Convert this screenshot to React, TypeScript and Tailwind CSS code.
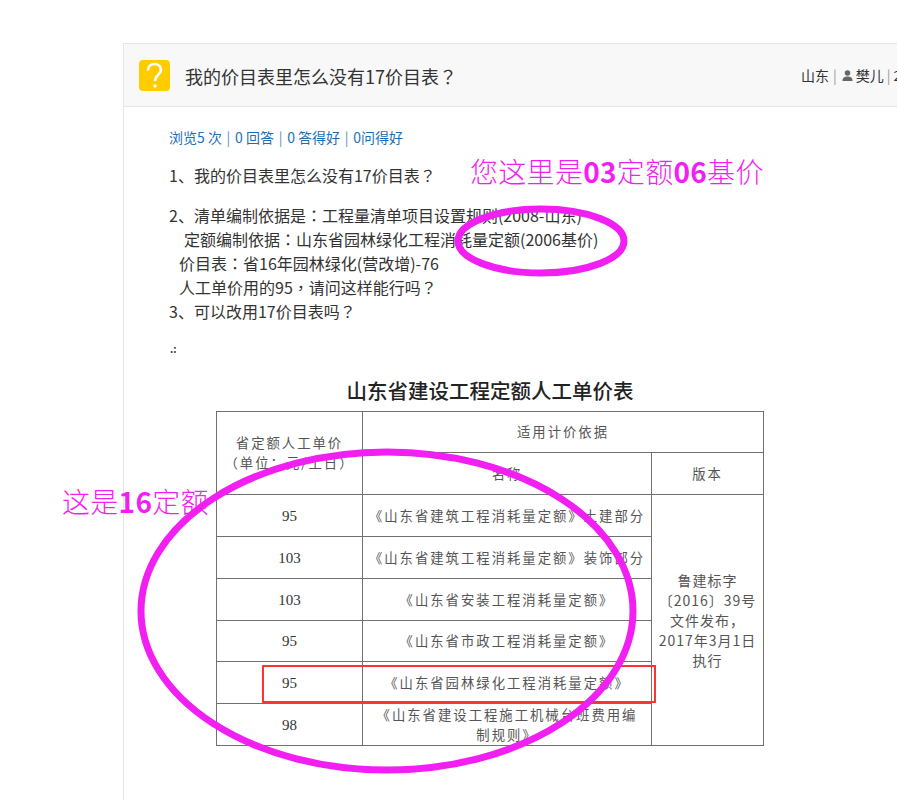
const cjk = "font-['Noto_Sans_CJK_SC','Liberation_Sans',sans-serif]";
const tc = "font-['Noto_Sans_CJK_TC','Liberation_Sans',sans-serif]";

function Sep({ tone, gap }: { tone: string; gap: string }) {
  return <span className={`${gap} ${tone}`}>|</span>;
}

function P({ c }: { c: string }) {
  return <span className={tc}>{c}</span>;
}

const rows: { price: string; h: string; name: React.ReactNode }[] = [
  { price: "95", h: "h-[42px]", name: "《山东省建筑工程消耗量定额》土建部分" },
  { price: "103", h: "h-[42px]", name: "《山东省建筑工程消耗量定额》装饰部分" },
  { price: "103", h: "h-[42px]", name: "《山东省安装工程消耗量定额》" },
  { price: "95", h: "h-[41px]", name: "《山东省市政工程消耗量定额》" },
  { price: "95", h: "h-[42px]", name: "《山东省园林绿化工程消耗量定额》" },
  { price: "98", h: "h-[42px]", name: <>《山东省建设工程施工机械台班费用编<br />制规则》</> },
];

const cell = "border border-[#707070] text-center align-middle p-0";

export default function App() {
  return (
    <div className={`relative w-[897px] h-[800px] overflow-hidden bg-white ${cjk}`}>
      <div className="pt-[43px] pl-[123px]">
        <div className="w-[900px] h-[757px] border-t border-l border-[#e5e5e5]">
          <header className="flex items-center h-[63px] bg-[#f8f8f8] border-b border-[#e5e5e5] pl-[15px]">
            <div className="flex items-center justify-center w-[31px] h-[31px] rounded-[4px] bg-[#ffcc00]">
              <svg viewBox="0 0 31 31" className="w-[31px] h-[31px]" fill="none" stroke="#fff" strokeWidth="2.6">
                <path d="M9 10.5 C9 6.5 12 4 15.5 4 C19.5 4 22 6.8 22 10 C22 14.5 16 15 16 21" />
                <circle cx="16" cy="26" r="1.8" fill="#fff" stroke="none" />
              </svg>
            </div>
            <h1 className="ml-[15px] pt-[1px] text-[18px] leading-[26px] text-[#333]">我的价目表里怎么没有17价目表<P c="？" /></h1>
            <div className="ml-[344px] flex items-center text-[14px] text-[#333] whitespace-nowrap">
              <span>山东</span>
              <Sep tone="text-[#999]" gap="mx-[4px]" />
              <svg viewBox="0 0 12 12" className="w-[11px] h-[11px] mx-[1px] fill-[#666]">
                <circle cx="6" cy="3.2" r="3" />
                <path d="M0.5 12 C0.5 8 3 7 6 7 C9 7 11.5 8 11.5 12 Z" />
              </svg>
              <span className="ml-[2px]">樊儿</span>
              <Sep tone="text-[#999]" gap="mx-[3px]" />
              <span>2017-04-10</span>
            </div>
          </header>

          <main className="pl-[45px] pt-[18px]">
            <p className="text-[14px] leading-[24px] text-[#1a6fb8]">
              浏览5 次<Sep tone="text-[#5f8fc4]" gap="mx-[4.7px]" />0 回答<Sep tone="text-[#5f8fc4]" gap="mx-[4.7px]" />0 答得好<Sep tone="text-[#5f8fc4]" gap="mx-[4.7px]" />0问得好
            </p>
            <div className="mt-[14px] text-[16px] leading-[24px] text-[#333] whitespace-nowrap">
              <p className="mb-4">1、我的价目表里怎么没有17价目表<P c="？" /></p>
              <p>2、清单编制依据是<P c="：" />工程量清单项目设置规则(2008-山东)</p>
              <p className="pl-[15px]">定额编制依据<P c="：" />山东省园林绿化工程消耗量定额(2006基价)</p>
              <p className="pl-[10px]">价目表<P c="：" />省16年园林绿化(营改增)-76</p>
              <p className="pl-[10px]">人工单价用的95<P c="，" />请问这样能行吗<P c="？" /></p>
              <p>3、可以改用17价目表吗<P c="？" /></p>
              <p className="mt-[14px] text-[10px] font-bold text-[#333] pl-[1px]">.:</p>
            </div>

            <div className="ml-[47px] w-[548px] mt-[15px]">
              <h2 className="text-center text-[20.5px] leading-[28px] font-medium text-[#222]">山东省建设工程定额人工单价表</h2>
              <table className="mt-[7px] w-[547px] table-fixed border-collapse text-[13.35px] leading-[20px] tracking-[2px] text-[#555]">
                <colgroup>
                  <col className="w-[146px]" />
                  <col className="w-[289px]" />
                  <col className="w-[112px]" />
                </colgroup>
                <tbody>
                  <tr className="h-[41px]">
                    <td rowSpan={2} className={cell}>省定额人工单价<br />（单位：元/工日）</td>
                    <td colSpan={2} className={cell}>适用计价依据</td>
                  </tr>
                  <tr className="h-[42px]">
                    <td className={cell}>名称</td>
                    <td className={cell}>版本</td>
                  </tr>
                  {rows.map((r, i) => (
                    <tr key={i} className={r.h}>
                      <td className={`${cell} font-['Liberation_Serif',serif] text-[15px] tracking-normal text-[#333]`}>{r.price}</td>
                      <td className={`${cell} whitespace-nowrap`}>{r.name}</td>
                      {i === 0 && (
                        <td rowSpan={6} className={`${cell} tracking-[1px] text-[14px]`}>
                          鲁建标字<br />〔2016〕39号<br />文件发布，<br />2017年3月1日<br />执行
                        </td>
                      )}
                    </tr>
                  ))}
                </tbody>
              </table>
            </div>
          </main>
        </div>
      </div>

      {/* annotations drawn over the screenshot */}
      <div className="absolute left-[262px] top-[665px] w-[394px] h-[38px] border-2 border-[#ff3333]" />
      <svg className="absolute left-0 top-0 pointer-events-none" width="897" height="800" fill="none" stroke="#f21ff2">
        <ellipse cx="541" cy="241" rx="83" ry="32" strokeWidth="7" />
        <ellipse cx="387" cy="611" rx="246" ry="159" strokeWidth="7" />
      </svg>
      <div className="absolute left-[470px] top-[151px] text-[28px] leading-[40px] font-light tracking-[0.3px] text-[#f21ff2] whitespace-nowrap">
        您这里是<b className="font-bold">03</b>定额<b className="font-bold">06</b>基价
      </div>
      <div className="absolute left-[62px] top-[481px] text-[28px] leading-[40px] font-light tracking-[0.3px] text-[#f21ff2] whitespace-nowrap">
        这是<b className="font-bold">16</b>定额
      </div>
    </div>
  );
}
